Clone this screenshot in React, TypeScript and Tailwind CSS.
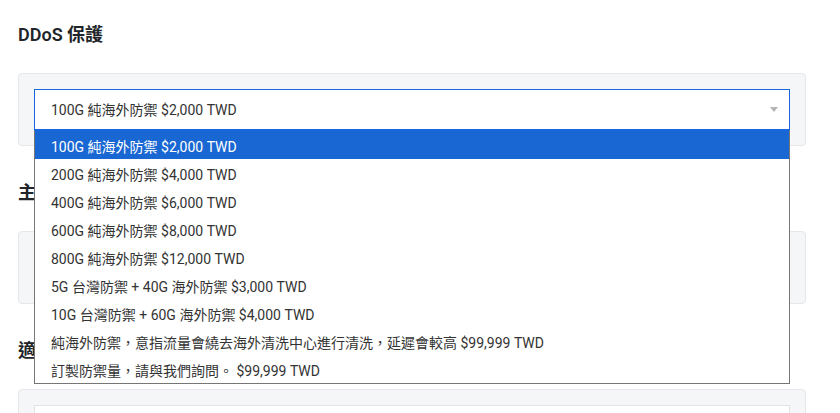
const options = [
  '100G 純海外防禦 $2,000 TWD',
  '200G 純海外防禦 $4,000 TWD',
  '400G 純海外防禦 $6,000 TWD',
  '600G 純海外防禦 $8,000 TWD',
  '800G 純海外防禦 $12,000 TWD',
  '5G 台灣防禦 + 40G 海外防禦 $3,000 TWD',
  '10G 台灣防禦 + 60G 海外防禦 $4,000 TWD',
  '純海外防禦，意指流量會繞去海外清洗中心進行清洗，延遲會較高 $99,999 TWD',
  '訂製防禦量，請與我們詢問。 $99,999 TWD',
];

const Section = ({ title, children }: { title: string; children: React.ReactNode }) => (
  <section className="mb-[35px]">
    <h2 className="h-6 leading-6 text-lg font-semibold text-[#212529] mb-[26px]">{title}</h2>
    <div className="rounded border border-[#e6e7ea] bg-[#f5f6f8] px-[15px] py-[15px]">{children}</div>
  </section>
);

const App = () => {
  return (
    <div className="min-h-screen bg-white font-['Roboto','Noto_Sans_CJK_TC',sans-serif] text-[#333] px-[18px] pt-[23px] overflow-hidden h-[413px]">
      <div className="w-[788px]">
        <Section title="DDoS 保護">
          <div className="relative">
            <div className="h-[41px] border border-[#1a66e0] bg-white flex items-center pl-4 pr-[11px] text-sm">
              <span className="flex-1 pt-[1px]">{options[0]}</span>
              <span className="w-0 h-0 border-l-[4px] border-r-[4px] border-t-[5px] border-l-transparent border-r-transparent border-t-[#b4b4b4]" />
            </div>
            {/* open dropdown list */}
            <ul className="absolute left-0 right-0 top-[41px] z-10 border border-[#767676] border-t-[#1a66e0] bg-white text-sm">
              {options.map((o, i) => (
                <li
                  key={o}
                  className={`h-7 flex items-center pl-4 pt-1 whitespace-nowrap ${i === 0 ? 'bg-[#1967d2] text-white' : 'text-[#333]'}`}
                >
                  {o}
                </li>
              ))}
            </ul>
          </div>
        </Section>
        <Section title="主機位置">
          <div className="h-[41px] border border-[#e1e3e6] bg-white flex items-center pl-4 text-sm">台灣</div>
        </Section>
        <Section title="適用方案">
          <div className="h-[41px] border border-[#e1e3e6] bg-white flex items-center pl-4 text-sm">基本方案</div>
        </Section>
      </div>
    </div>
  );
};

export default App;
